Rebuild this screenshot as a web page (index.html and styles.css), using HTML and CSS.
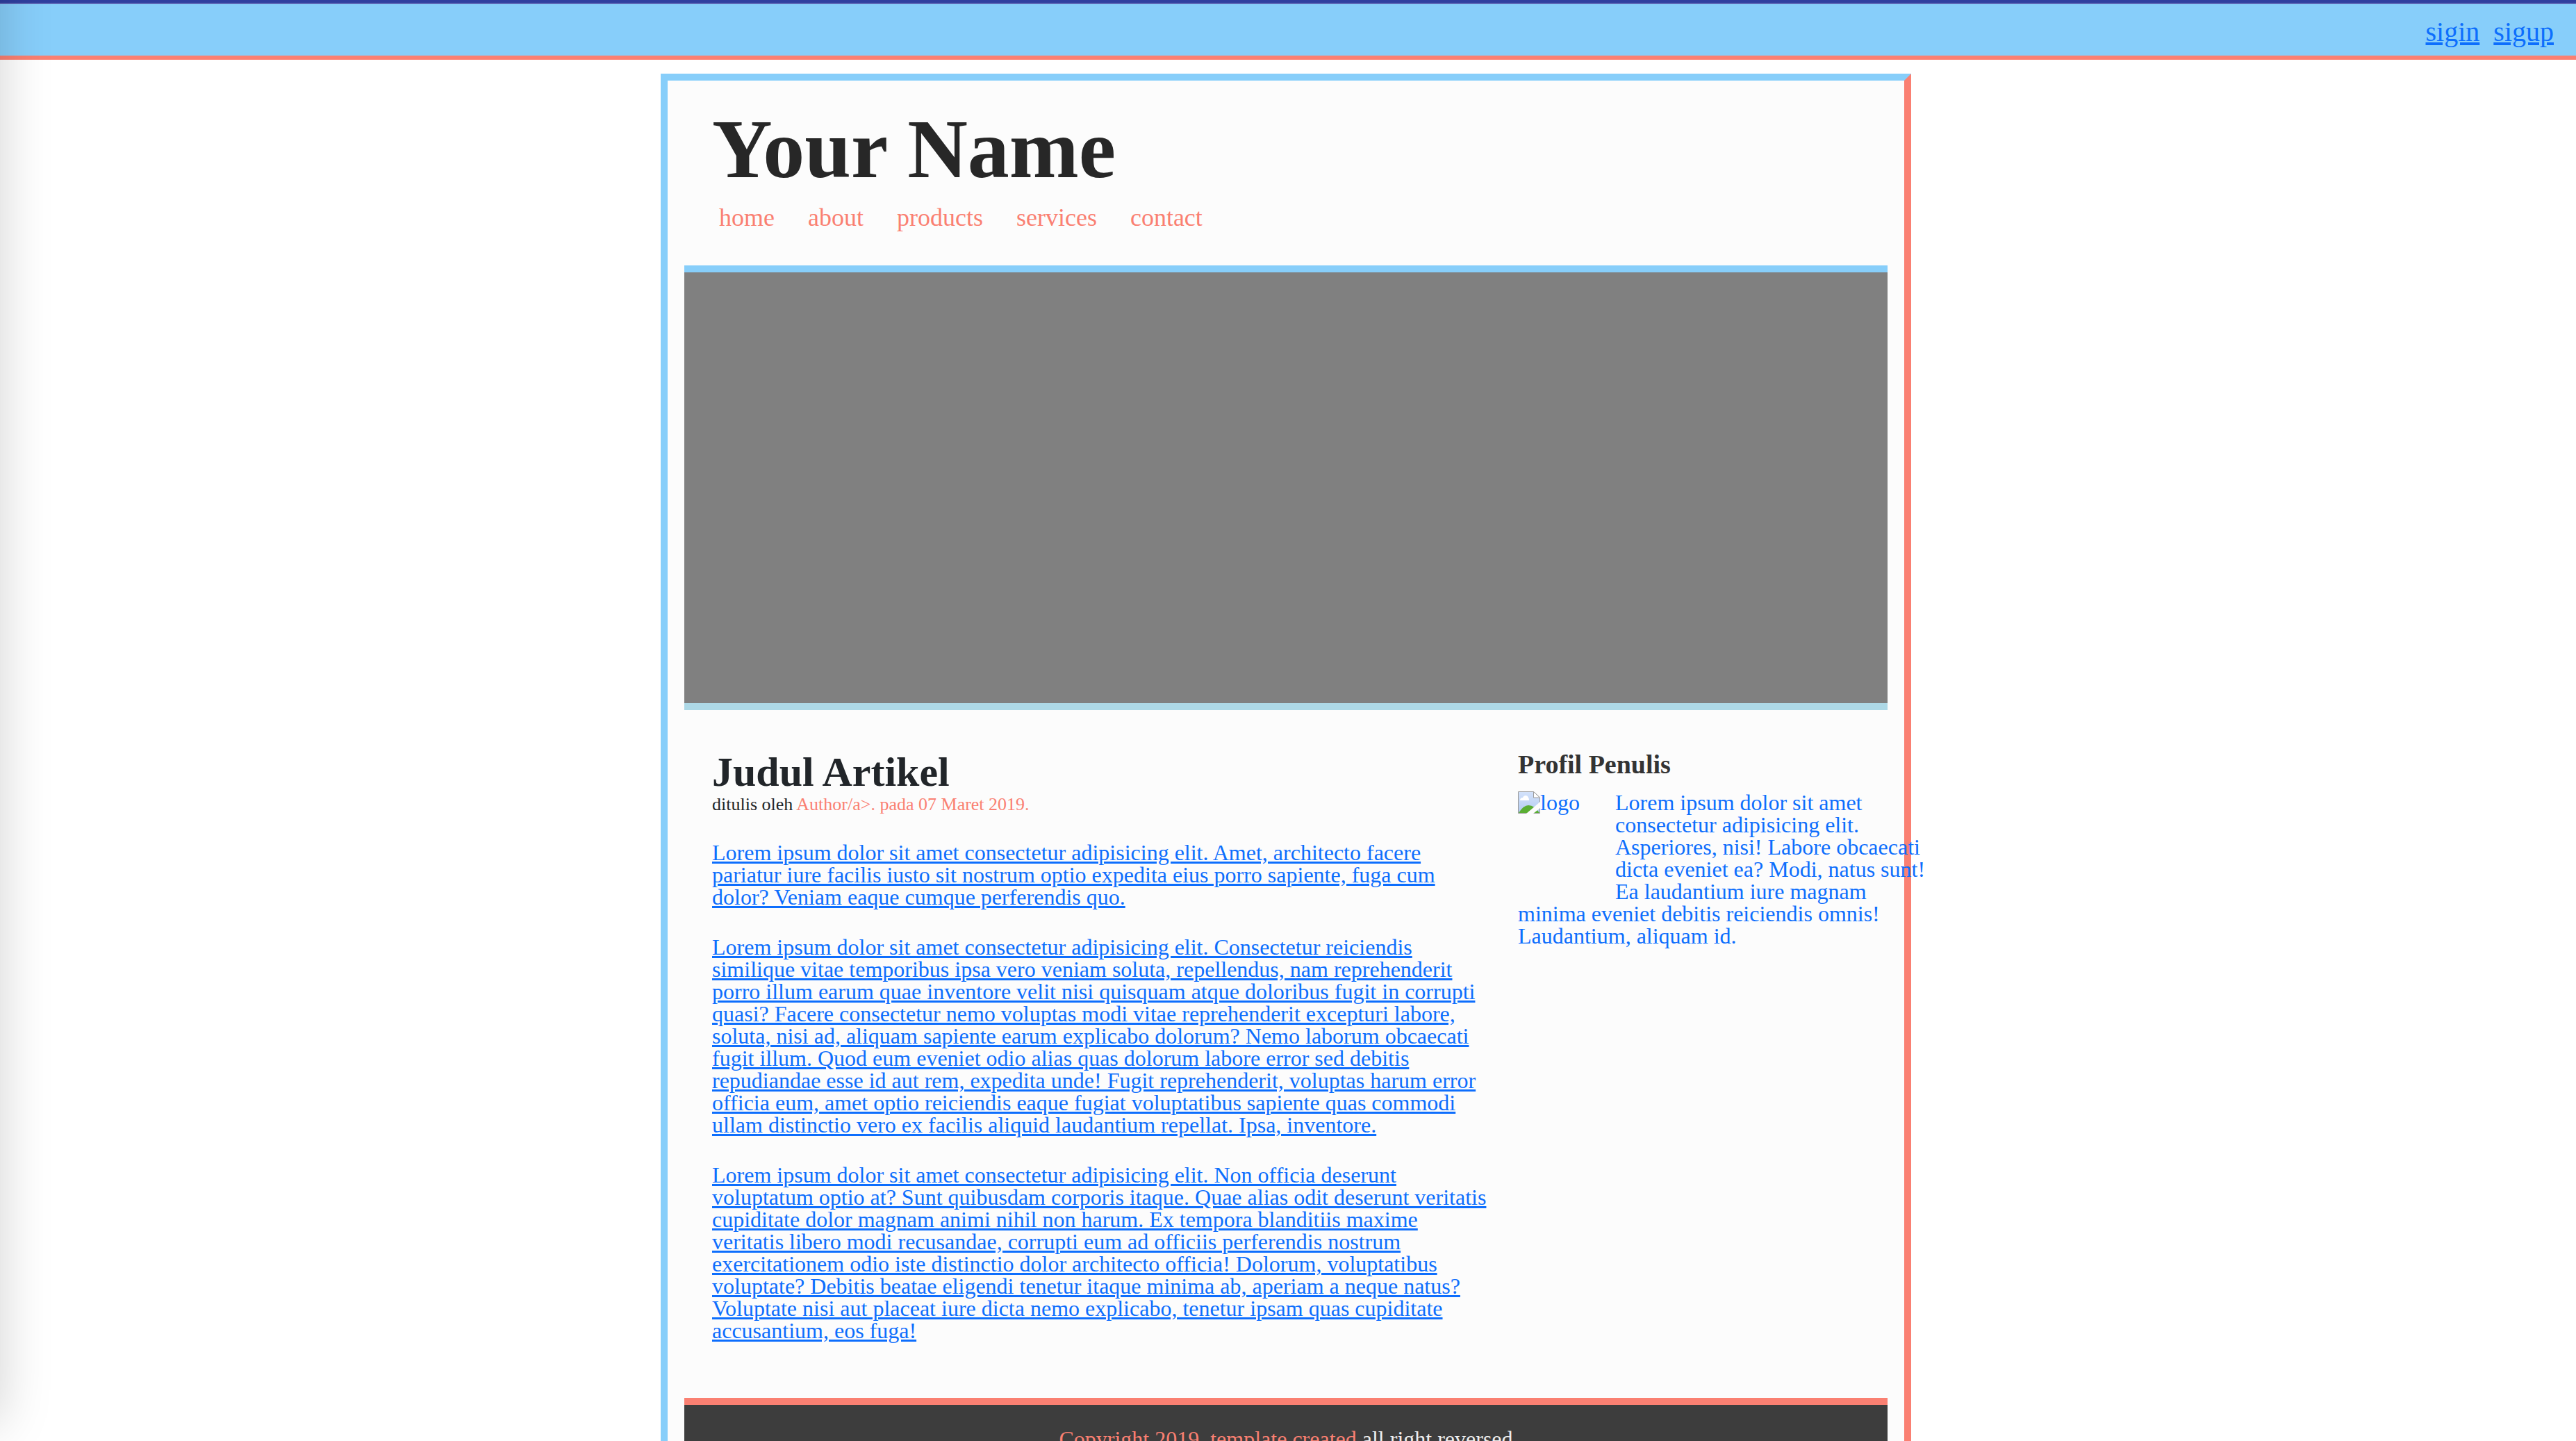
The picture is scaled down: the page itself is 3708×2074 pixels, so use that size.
FILE: index.html
```html
<!DOCTYPE html>
<html lang="id">
<head>
<meta charset="utf-8">
<title>Your Name</title>
<link rel="stylesheet" href="styles.css">
</head>
<body>
<div class="drawer"></div>
<div class="topbar">
  <a href="#">sigin</a>
  <a href="#">sigup</a>
</div>
<div class="page">
  <div class="container">
    <header class="header">
      <h1 class="title">Your Name</h1>
      <nav class="nav">
        <a href="#">home</a>
        <a href="#">about</a>
        <a href="#">products</a>
        <a href="#">services</a>
        <a href="#">contact</a>
      </nav>
    </header>
    <div class="hero"></div>
    <div class="content">
      <article class="article">
        <h2 class="article-title">Judul Artikel</h2>
        <p class="byline">ditulis oleh <a href="#">Author/a&gt;. pada 07 Maret 2019.</a></p>
        <p><a href="#">Lorem ipsum dolor sit amet consectetur adipisicing elit. Amet, architecto facere pariatur iure facilis iusto sit nostrum optio expedita eius porro sapiente, fuga cum dolor? Veniam eaque cumque perferendis quo.</a></p>
        <p><a href="#">Lorem ipsum dolor sit amet consectetur adipisicing elit. Consectetur reiciendis similique vitae temporibus ipsa vero veniam soluta, repellendus, nam reprehenderit porro illum earum quae inventore velit nisi quisquam atque doloribus fugit in corrupti quasi? Facere consectetur nemo voluptas modi vitae reprehenderit excepturi labore, soluta, nisi ad, aliquam sapiente earum explicabo dolorum? Nemo laborum obcaecati fugit illum. Quod eum eveniet odio alias quas dolorum labore error sed debitis repudiandae esse id aut rem, expedita unde! Fugit reprehenderit, voluptas harum error officia eum, amet optio reiciendis eaque fugiat voluptatibus sapiente quas commodi ullam distinctio vero ex facilis aliquid laudantium repellat. Ipsa, inventore.</a></p>
        <p><a href="#">Lorem ipsum dolor sit amet consectetur adipisicing elit. Non officia deserunt voluptatum optio at? Sunt quibusdam corporis itaque. Quae alias odit deserunt veritatis cupiditate dolor magnam animi nihil non harum. Ex tempora blanditiis maxime veritatis libero modi recusandae, corrupti eum ad officiis perferendis nostrum exercitationem odio iste distinctio dolor architecto officia! Dolorum, voluptatibus voluptate? Debitis beatae eligendi tenetur itaque minima ab, aperiam a neque natus? Voluptate nisi aut placeat iure dicta nemo explicabo, tenetur ipsam quas cupiditate accusantium, eos fuga!</a></p>
      </article>
      <aside class="sidebar">
        <h3 class="sidebar-title">Profil Penulis</h3>
        <a class="profile" href="#"><span class="logo"><svg width="32" height="32" viewBox="0 0 32 32" aria-hidden="true"><defs><linearGradient id="sky" x1="0" y1="0" x2="0" y2="1"><stop offset="0" stop-color="#d3e2fb"/><stop offset="1" stop-color="#b3cbf0"/></linearGradient></defs><path d="M.5 .5H22.500L31.500 9V31.500H.5Z" fill="url(#sky)" stroke="#9a9a9a"/><path d="M3 13Q3 9 7 9Q8 6 11 6Q14 6 15 9Q16 10 16 13Z" fill="#fff"/><path d="M1 31Q8 20 15 20Q24 20 31 31Z" fill="#5aae33"/><path d="M12 32L32 15V24L22 32Z" fill="#fcfcfc"/><path d="M22.500 .5V9H31.500Z" fill="#fff" stroke="#9a9a9a"/></svg>logo</span>Lorem ipsum dolor sit amet consectetur adipisicing elit. Asperiores, nisi! Labore obcaecati dicta eveniet ea? Modi, natus sunt! Ea laudantium iure magnam minima eveniet debitis reiciendis omnis! Laudantium, aliquam id.</a>
      </aside>
    </div>
    <footer class="footer"><a href="#">Copyright 2019. template created</a> all right reversed</footer>
  </div>
</div>
</body>
</html>
```
FILE: styles.css
```css
* { box-sizing: border-box; }
body {
  margin: 0;
  background: #fff;
  color: #212529;
  font: 32px/32px "Liberation Serif", "Times New Roman", serif;
}
h1, h2, h3, p { margin: 0; }
a {
  color: #0d6efd;
  text-decoration-thickness: 3px;
  text-underline-offset: 2px;
}

/* closed side drawer: only its shadow reaches the page */
.drawer {
  position: fixed;
  z-index: 2;
  top: -100px;
  bottom: 27px;
  left: -400px;
  width: 400px;
  box-shadow: 0 0 70px rgba(0, 0, 0, 0.18);
}

.topbar {
  display: flex;
  justify-content: flex-end;
  gap: 20px;
  padding: 22px 32px 14px;
  border-top: 4px solid #303f9f;
  border-bottom: 6px solid salmon;
  background: lightskyblue;
  box-shadow: inset 0 2px 0 #5c67b6;
  font-size: 40px;
  line-height: 40px;
}
.topbar a { text-decoration-thickness: 4px; }

.page { padding: 20px 6px 20px 0; }
.container {
  max-width: 1800px;
  margin: 0 auto;
  padding: 0 24px;
  border: 10px solid lightskyblue;
  border-right-color: salmon;
  border-bottom-color: salmon;
  background: #fcfcfc;
}

.header { padding: 39px 40px 51px; }
.title {
  margin-bottom: 20px;
  color: #272727;
  font-size: 120px;
  line-height: 120px;
}
.nav {
  display: flex;
  gap: 48px;
  padding-left: 10px;
  font-size: 36px;
  line-height: 36px;
}
.nav a, .byline a, .footer a { color: salmon; text-decoration: none; }

.hero {
  height: 640px;
  border-top: 10px solid lightskyblue;
  border-bottom: 10px solid lightblue;
  background: gray;
}

.content {
  display: flex;
  gap: 40px;
  padding: 59px 0 81px 40px;
}
.article { flex: 0 0 1120px; }
.article p + p { margin-top: 40px; }
.article-title { margin-bottom: 4px; font-size: 60px; line-height: 60px; }
.article .byline { font-size: 26px; line-height: 26px; }

.sidebar { flex: 0 0 600px; }
.sidebar-title {
  margin-bottom: 20px;
  color: #333;
  font-size: 38px;
  line-height: 38px;
}
.profile { display: block; text-decoration: none; }
.logo {
  float: left;
  display: flex;
  width: 100px;
  height: 120px;
  margin: 0 40px 40px 0;
}
.logo svg { flex: none; }

.footer {
  padding: 33px 40px;
  border-top: 10px solid salmon;
  background: #3d3d3d;
  color: #eee;
  text-align: center;
}
```
